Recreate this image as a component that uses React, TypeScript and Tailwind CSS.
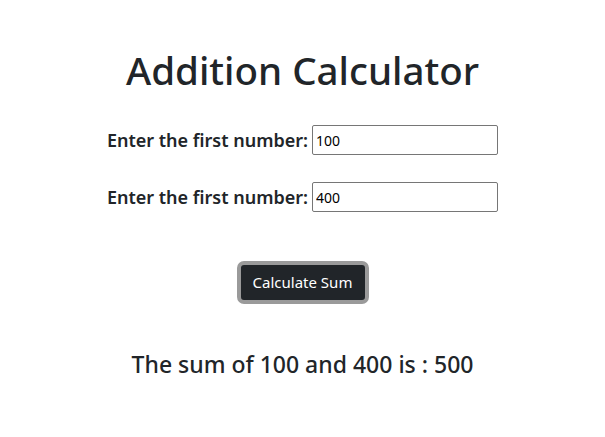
export default function App() {
  return (
    <div
      className="flex min-h-[437px] flex-col items-center bg-white text-[#212529]"
      style={{ fontFamily: '"Noto Sans", "Open Sans", sans-serif' }}
    >
      <h1 className="mt-[46px] text-[38.5px] font-medium leading-[48px]">Addition Calculator</h1>

      <div className="mt-[31px] flex items-center">
        <label className="text-[18px] font-semibold">Enter the first number:</label>
        <input
          defaultValue="100"
          className="ml-[4px] h-[30px] w-[186px] rounded-[2px] border border-[#767676] px-[3px] text-[14px] text-black"
        />
      </div>

      <div className="mt-[27px] flex items-center">
        <label className="text-[18px] font-semibold">Enter the first number:</label>
        <input
          defaultValue="400"
          className="ml-[4px] h-[30px] w-[186px] rounded-[2px] border border-[#767676] px-[3px] text-[14px] text-black"
        />
      </div>

      <button className="mt-[49px] h-[43px] w-[132px] rounded-[7px] border-4 border-[#9a9a9a] bg-[#212529] text-[15px] text-white">
        Calculate Sum
      </button>

      <p className="mt-[43px] text-[23px] font-medium">The sum of 100 and 400 is : 500</p>
    </div>
  );
}
